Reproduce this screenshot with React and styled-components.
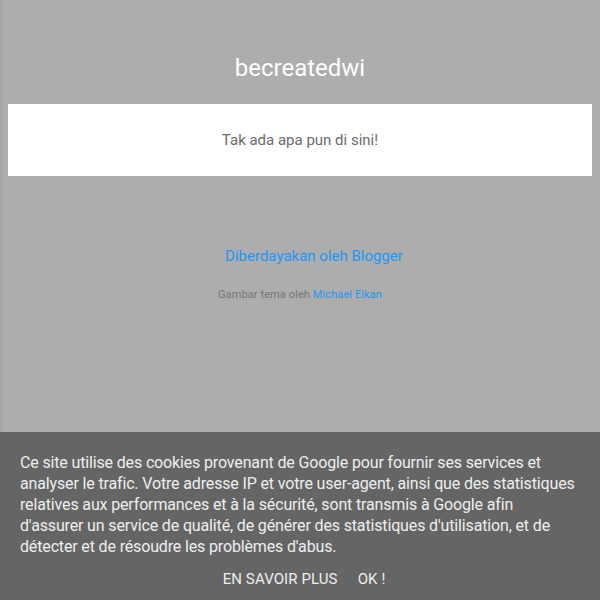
import React from "react";
import styled, { createGlobalStyle } from "styled-components";

const Global = createGlobalStyle`
  html, body { margin: 0; padding: 0; }
  body {
    background: #adadad;
    font-family: Roboto, "Noto Sans", sans-serif;
    width: 600px;
    height: 600px;
    overflow: hidden;
  }
`;

const Page = styled.div`
  width: 600px;
  height: 600px;
  position: relative;
  display: flex;
  flex-direction: column;
  box-shadow: inset 2px 0 0 rgba(0,0,0,0.04);
`;

const Header = styled.header`
  height: 104px;
  display: flex;
  align-items: center;
  justify-content: center;
  padding-top: 32px;
  box-sizing: border-box;
`;

const Title = styled.h1`
  margin: 0;
  font-size: 24px;
  font-weight: 400;
  color: #ffffff;
  line-height: 28px;
`;

const Card = styled.main`
  margin: 0 8px;
  background: #ffffff;
  height: 72px;
  display: flex;
  align-items: center;
  justify-content: center;
`;

const Empty = styled.p`
  margin: 0;
  font-size: 15px;
  color: #6b6b6b;
`;

const Footer = styled.footer`
  display: flex;
  flex-direction: column;
  align-items: center;
  padding-top: 70px;
`;

const Powered = styled.a`
  font-size: 15px;
  color: #2196f3;
  text-decoration: none;
  margin-left: 28px;
  line-height: 20px;
`;

const Attribution = styled.div`
  margin-top: 22px;
  font-size: 11px;
  letter-spacing: 0.1px;
  color: #757575;
  line-height: 14px;
`;

const Link = styled.a`
  color: #2196f3;
  text-decoration: none;
`;

const CookieBar = styled.div`
  position: absolute;
  left: 0;
  right: 0;
  bottom: 0;
  height: 168px;
  background: #656565;
  box-sizing: border-box;
  padding: 20px 20px 0;
  color: #eeeeee;
`;

const CookieText = styled.p`
  margin: 0;
  font-size: 16px;
  letter-spacing: -0.15px;
  line-height: 21px;
`;

const Actions = styled.div`
  display: flex;
  justify-content: center;
  gap: 20px;
  margin-top: 12px;
  padding-left: 8px;
`;

const Action = styled.a`
  font-size: 15px;
  letter-spacing: 0.1px;
  color: #eeeeee;
  text-decoration: none;
  line-height: 20px;
`;

export default function App() {
  return (
    <>
      <Global />
      <Page>
        <Header>
          <Title>becreatedwi</Title>
        </Header>
        <Card>
          <Empty>Tak ada apa pun di sini!</Empty>
        </Card>
        <Footer>
          <Powered href="#">Diberdayakan oleh Blogger</Powered>
          <Attribution>
            Gambar tema oleh <Link href="#">Michael Elkan</Link>
          </Attribution>
        </Footer>
        <CookieBar>
          <CookieText>
            Ce site utilise des cookies provenant de Google pour fournir ses services et analyser le trafic. Votre adresse IP et votre user-agent, ainsi que des statistiques relatives aux performances et à la sécurité, sont transmis à Google afin d'assurer un service de qualité, de générer des statistiques d'utilisation, et de détecter et de résoudre les problèmes d'abus.
          </CookieText>
          <Actions>
            <Action href="#">EN SAVOIR PLUS</Action>
            <Action href="#">OK !</Action>
          </Actions>
        </CookieBar>
      </Page>
    </>
  );
}
